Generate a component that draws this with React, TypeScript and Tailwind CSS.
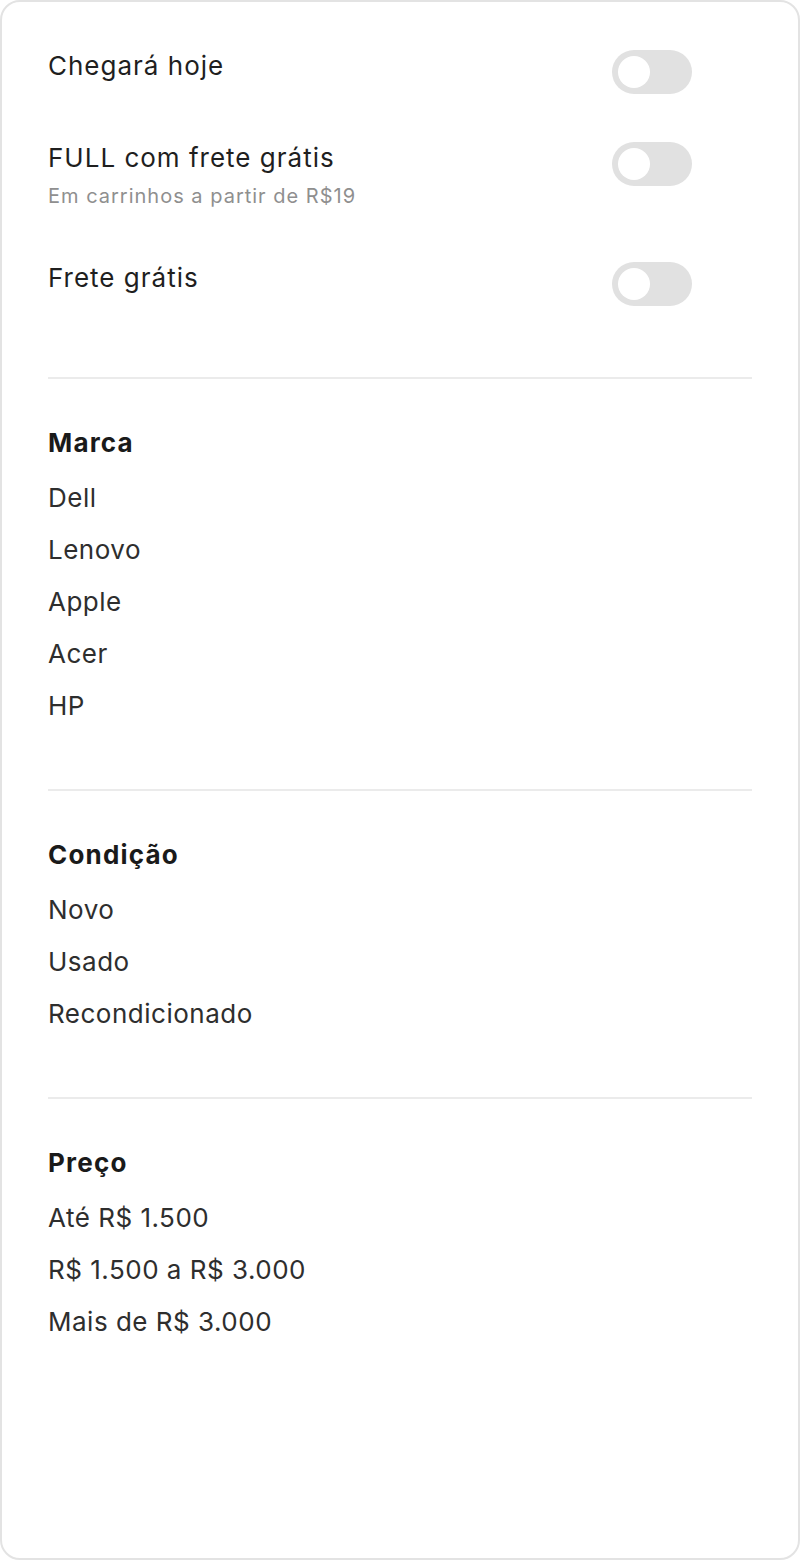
import { useState } from "react";

const toggles = [
  { id: "today", label: "Chegará hoje" },
  { id: "full", label: "FULL com frete grátis", hint: "Em carrinhos a partir de R$19" },
  { id: "free", label: "Frete grátis" },
];

const groups = [
  { title: "Marca", options: ["Dell", "Lenovo", "Apple", "Acer", "HP"] },
  { title: "Condição", options: ["Novo", "Usado", "Recondicionado"] },
  { title: "Preço", options: ["Até R$ 1.500", "R$ 1.500 a R$ 3.000", "Mais de R$ 3.000"] },
];

function Switch({ on, onToggle }: { on: boolean; onToggle: () => void }) {
  return (
    <button
      type="button"
      onClick={onToggle}
      className={
        "mt-[2px] mr-[60px] flex h-11 w-20 shrink-0 items-center rounded-full px-[6px] transition-colors " +
        (on ? "bg-[#3483fa]" : "bg-[#e1e1e1]")
      }
    >
      <span
        className={
          "block size-8 rounded-full bg-white transition-transform " + (on ? "translate-x-9" : "translate-x-0")
        }
      />
    </button>
  );
}

export default function App() {
  const [active, setActive] = useState<Record<string, boolean>>({});

  return (
    <div className="font-['Inter',sans-serif] bg-white">
      <aside className="box-border flex h-[1560px] w-[800px] flex-col rounded-[20px] border-2 border-[#e3e3e3] bg-white px-[46px]">
        {/* shipping switches */}
        <div className="flex flex-col gap-[46px] pt-[46px] pb-[71px]">
          {toggles.map((t) => (
            <div key={t.id} className="flex items-start justify-between">
              <div>
                <p className="text-[26px] leading-9 tracking-[1px] text-[#1f1f1f]">{t.label}</p>
                {t.hint && (
                  <p className="mt-[6px] mb-[4px] text-[20px] leading-7 tracking-[1px] text-[#8f8f8f]">{t.hint}</p>
                )}
              </div>
              <Switch
                on={!!active[t.id]}
                onToggle={() => setActive((s) => ({ ...s, [t.id]: !s[t.id] }))}
              />
            </div>
          ))}
        </div>

        {groups.map((g) => (
          <section key={g.title} className="border-t-2 border-[#ebebeb] pt-[46px] pb-[65px]">
            <h3 className="text-[26px] leading-9 font-bold tracking-[1.2px] text-[#1a1a1a]">{g.title}</h3>
            <ul className="mt-[19px] flex flex-col gap-4">
              {g.options.map((o) => (
                <li key={o} className="text-[26px] leading-9 tracking-[0.5px] text-[#2e2e2e]">
                  {o}
                </li>
              ))}
            </ul>
          </section>
        ))}
      </aside>
    </div>
  );
}
